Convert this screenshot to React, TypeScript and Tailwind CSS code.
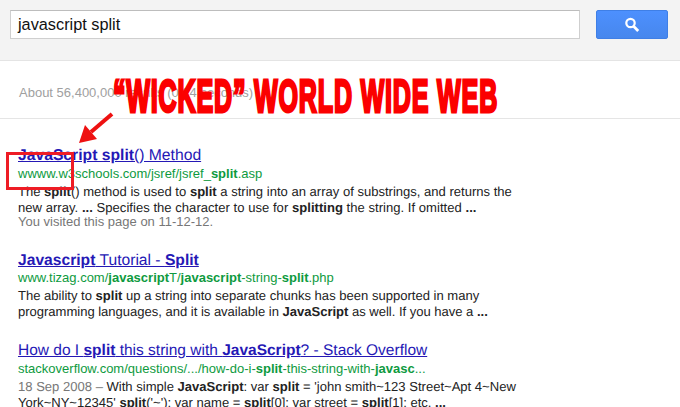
import React from "react";

const B = ({ children }: { children: React.ReactNode }) => <b className="font-bold">{children}</b>;

export default function App() {
  return (
    <div className="relative w-[680px] h-[407px] overflow-hidden bg-white font-['Liberation_Sans',Arial,sans-serif]">
      <header className="h-[61px] bg-[#f3f3f3] border-b border-[#e4e4e4] flex items-start gap-[16px] pl-[10px] pt-[10px]">
        <div className="w-[570px] h-[29px] bg-white border border-[#cfcfcf] border-t-[#bdbdbd] flex items-center pl-[7px] text-[16.3px] text-[#111]">
          javascript split
        </div>
        <button className="w-[72px] h-[29px] rounded-[2px] bg-gradient-to-b from-[#4d90fe] to-[#4787ed] border border-[#3f7fe6] flex items-center justify-center">
          <svg width="16" height="16" viewBox="0 0 16 16" fill="none" stroke="white">
            <circle cx="6.5" cy="6" r="4.2" strokeWidth="2.2" />
            <path d="M9.6 9.3 14.2 14" strokeWidth="2.8" />
          </svg>
        </button>
      </header>

      <div className="h-[58px] border-b border-[#e5e5e5] pl-[19px] pt-[24px] text-[13px] leading-[16px] text-[#a0a0a0]">
        About 56,400,000 results (0.24 seconds)
      </div>

      <main className="pl-[18px] pt-[27px] text-[13.05px] leading-[16px] text-[#222]">
        <section className="mb-[21px]">
          <h3 className="text-[15.7px] leading-[20px] text-[#2518b5] underline font-normal [text-rendering:geometricPrecision]">
            <B>JavaScript split</B>() Method
          </h3>
          <div className="text-[#0e9a3e] text-[13px] leading-[17px] mt-[-1px] mb-[2px]">
            wwww.w3schools.com/jsref/jsref_<B>split</B>.asp
          </div>
          <p className="[text-rendering:geometricPrecision]">
            <span>The <B>split</B>() method is used to <B>split</B> a string into an array of substrings, and returns the</span>
            <br />
            <span className="tracking-[0.03px]">new array. <B>...</B> Specifies the character to use for <B>splitting</B> the string. If omitted <B>...</B></span>
          </p>
          <p className="text-[#777] text-[13px] mt-[-2px]">You visited this page on 11-12-12.</p>
        </section>

        <section className="mb-[21px]">
          <h3 className="text-[15.65px] leading-[20px] text-[#2518b5] underline font-normal [text-rendering:geometricPrecision]">
            <B>Javascript</B> Tutorial - <B>Split</B>
          </h3>
          <div className="text-[#0e9a3e] text-[13px] leading-[17px] mt-[-2px] mb-[2px]">
            www.tizag.com/<B>javascript</B>T/<B>javascript</B>-string-<B>split</B>.php
          </div>
          <p className="[text-rendering:geometricPrecision]">
            <span>The ability to <B>split</B> up a string into separate chunks has been supported in many</span>
            <br />
            <span className="tracking-[-0.02px]">programming languages, and it is available in <B>JavaScript</B> as well. If you have a <B>...</B></span>
          </p>
        </section>

        <section>
          <h3 className="text-[15.5px] leading-[20px] text-[#2518b5] underline font-normal [text-rendering:geometricPrecision]">
            How do I <B>split</B> this string with <B>JavaScript</B>? - Stack Overflow
          </h3>
          <div className="text-[#0e9a3e] text-[13px] leading-[17px] mt-[-1px] mb-[2px]">
            stackoverflow.com/questions/.../how-do-i-<B>split</B>-this-string-with-<B>javasc</B>...
          </div>
          <p className="[text-rendering:geometricPrecision]">
            <span><span className="text-[#777]">18 Sep 2008 – </span>With simple <B>JavaScript</B>: var <B>split</B> = 'john smith~123 Street~Apt 4~New</span>
            <br />
            <span>York~NY~12345' <B>split</B>('~'); var name = <B>split</B>[0]; var street = <B>split</B>[1]; etc. <B>...</B></span>
          </p>
        </section>
      </main>

      <div className="absolute left-[113px] top-[71px] text-[46px] leading-[50px] font-bold text-[#fb0000] whitespace-nowrap origin-left scale-x-[0.545] [-webkit-text-stroke:3px_#fb0000] tracking-[1.5px]">
        “WICKED” WORLD WIDE WEB
      </div>

      <svg className="absolute left-[76px] top-[110px]" width="40" height="36" viewBox="0 0 40 36">
        <path d="M36 4 L15 22" stroke="#ee1111" strokeWidth="4" />
        <path d="M3 33 L9 15 L21 29 Z" fill="#ee1111" />
      </svg>

      <div className="absolute left-[6px] top-[152px] w-[68px] h-[38px] border-[3px] border-[#ee1c25]" />
    </div>
  );
}
